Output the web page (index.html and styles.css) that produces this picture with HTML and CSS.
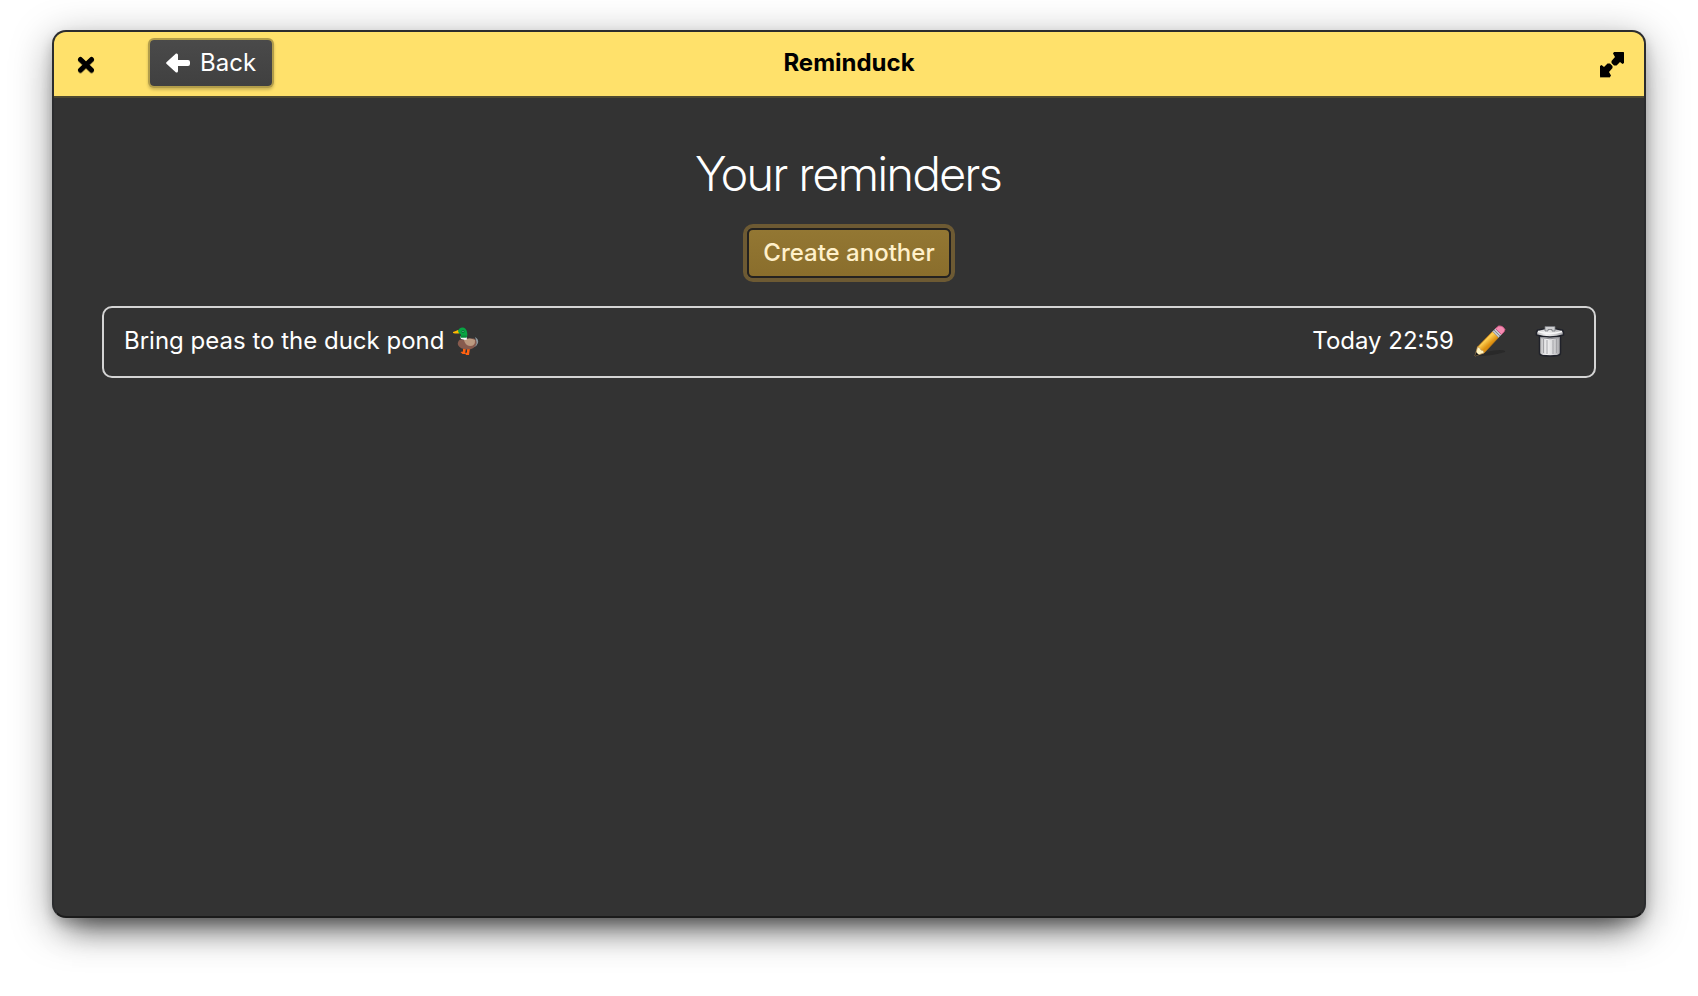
FILE: index.html
```
<!DOCTYPE html>
<html lang="en">
<head>
<meta charset="utf-8">
<meta name="viewport" content="width=device-width, initial-scale=1">
<title>Reminduck</title>
<link rel="stylesheet" href="styles.css">
</head>
<body>
<div class="window">
  <header class="headerbar">
    <div class="header-start">
      <button class="icon-button" type="button" aria-label="Close">
        <svg width="18" height="18" viewBox="0 0 18 18"><path d="M3.500 4.500 14.500 15M14.500 4.500 3.500 15" stroke="#000" stroke-opacity=".35" stroke-width="5" stroke-linecap="round"/><path d="M3.500 3.500 14.500 14M14.500 3.500 3.500 14" stroke="#000" stroke-width="5" stroke-linecap="round"/></svg>
      </button>
      <button class="back-button" type="button">
        <svg width="24" height="20" viewBox="0 0 24 20"><path d="M10 .5.700 9a1.300 1.300 0 0 0 0 2L10 19.500q2 .5 2-1.500v-5h10q2 0 2-2V9q0-2-2-2H12V2q0-2-2-1.500z" fill="#fff"/></svg>
        <span>Back</span>
      </button>
    </div>
    <h1 class="title">Reminduck</h1>
    <div class="header-end">
      <button class="icon-button" type="button" aria-label="Maximize">
        <svg width="24" height="26" viewBox="0 0 24 26"><g><path d="M14 0h9.500l.5.500V11l-1.500 1-2.500-2-3.500 3.500H14L11.500 11V9L15 5l-2-3.500z"/><path d="M10 25H.5L0 24.500V14l1.500-1L4 15l3.500-3.500H10l2.500 2.500v2L9 20l2 3.500z"/></g><path d="M0 25h10" stroke="#000" stroke-opacity=".35" stroke-width="2"/><path d="m10.500 14.500 4-4" stroke="#ffe16b" stroke-width="0"/></svg>
      </button>
    </div>
  </header>
  <main class="content">
    <h2 class="heading">Your reminders</h2>
    <button class="create-button" type="button">Create another</button>
    <ul class="reminders">
      <li class="reminder">
        <span class="description">Bring peas to the duck pond
          <svg class="duck" width="26" height="28" viewBox="0 0 26 28" role="img" aria-label="duck">
            <path d="M10 21v3.500l-2.500.5 2 2H12l1-6zM14 21v4.500l-2 .5 1 2h3l1-7z" fill="#ff6110"/>
            <path d="M21 18q3-4 1-8 4 2 3 6-1 3-4 4z" fill="#8b979f"/>
            <path d="M7 12.500q4 1 7-1h7q3 2 2.500 5Q22 22.500 14 22.500 7 22 5 18q-1-3 2-5.500z" fill="#875b4e"/>
            <path d="M11 13q6-3 11 0 .5 6-5 6-5-.5-6-6z" fill="#bc9a80"/>
            <path d="M7 9.500h6.500l.5 3-2 .5-4-1z" fill="#f4f6f6"/>
            <path d="M0 5q3-1 5-2l2 1v2q-3 1-7 0z" fill="#fcb900"/>
            <path d="M5 4q1-3.500 4.500-3.500T14 5t-1 5.500H7.500L8 7.500Q5.500 7 5 4z" fill="#08a443"/>
            <path d="M7.500 10.500 8 8.500h5.500v2z" fill="#07883b"/>
            <circle cx="10" cy="4.500" r="1.500" fill="#047937"/><circle cx="10" cy="4.500" r=".6" fill="#8cc9a0"/>
          </svg>
        </span>
        <time class="time">Today 22:59</time>
        <button class="row-button" type="button" aria-label="Edit reminder">
          <svg width="32" height="32" viewBox="0 0 32 32">
            <defs><linearGradient id="wood" x1="8" y1="12" x2="15" y2="20" gradientUnits="userSpaceOnUse"><stop offset="0" stop-color="#f3a51c"/><stop offset=".45" stop-color="#ffd052"/><stop offset="1" stop-color="#dd9010"/></linearGradient></defs>
            <path d="M3 31Q14 25 26 25q6 0 5 2-13 4-26 4z" fill="#292929"/>
            <path d="M3.500 22 19 6l6 6L10 28z" fill="url(#wood)" stroke="#be7b18" stroke-width=".8"/>
            <path d="M3.500 22 1 31l9-3q0-3-3-3-1-3-3.500-3z" fill="#fff3c0" stroke="#c99a52" stroke-width=".7"/>
            <path d="m1 31 1-4 3 3z" fill="#171717"/>
            <path d="m18.500 6.500 3-3 6 6-3 3z" fill="#c3c5ca" stroke="#8d8f95" stroke-width=".7"/>
            <path d="m20 5 6 6" stroke="#85878d"/>
            <path d="M21.500 3.500 24.500 1q4-1 6.500 3.500 0 2-3.500 5z" fill="#f58bb2" stroke="#ca527f" stroke-width=".8"/>
          </svg>
        </button>
        <button class="row-button" type="button" aria-label="Delete reminder">
          <svg width="32" height="32" viewBox="0 0 32 32">
            <defs><linearGradient id="metal"><stop offset="0" stop-color="#b8b8ba"/><stop offset=".35" stop-color="#f1f1f2"/><stop offset=".65" stop-color="#d6d6d8"/><stop offset="1" stop-color="#a2a2a6"/></linearGradient></defs>
            <path d="M5.500 11h21v17q0 2-3 2.500-7 1-15 0-3-.5-3-2.500z" fill="url(#metal)" stroke="#20222a" stroke-width="1.500"/>
            <path d="M9.500 14v14M13 15v14M19 15v14M22.500 14v14" stroke="#a2a2a6" stroke-width="1"/>
            <path d="M4 5q12-3 24 0 2 1 1.500 5-13.500 4-27 0Q2 6 4 5z" fill="url(#metal)" stroke="#20222a" stroke-width="1.500"/>
            <path d="M4 6.500q12 4 24 0" fill="none" stroke="#f7f7f7" stroke-width="1.500"/>
            <path d="M6 12.500q10 2.500 20 0" fill="none" stroke="#88888d"/>
            <path d="M11 6V1.500h10V6h-3V4.500h-4V6z" fill="#cecfd1" stroke="#77797f" stroke-width=".8"/>
          </svg>
        </button>
      </li>
    </ul>
  </main>
</div>
</body>
</html>
```

FILE: styles.css
```
* { box-sizing: border-box; }

body {
  margin: 0;
  min-height: 100vh;
  padding: 30px 52px 78px;
  display: flex;
  background: #fff;
  color: #fff;
  font-family: Inter, "Open Sans", sans-serif;
  font-size: 24px;
  line-height: 30px;
}

button {
  margin: 0;
  padding: 0;
  border: 0;
  background: none;
  color: inherit;
  font: inherit;
}

svg { display: block; flex: none; }

.window {
  flex: 1;
  display: flex;
  flex-direction: column;
  overflow: hidden;
  border: 2px solid #2b2c2e;
  border-bottom-color: #1b1b1b;
  border-radius: 14px;
  background: #333;
  box-shadow: 0 6px 12px rgba(0, 0, 0, .18), 0 28px 28px -20px rgba(0, 0, 0, .5), 0 10px 40px rgba(0, 0, 0, .36);
}

.headerbar {
  display: grid;
  grid-template-columns: 1fr auto 1fr;
  align-items: start;
  height: 66px;
  padding: 6px 16px;
  border-bottom: 2px solid #4e4930;
  background: #ffe16b;
  color: #000;
}

.header-start {
  display: flex;
  gap: 46px;
}

.header-end {
  display: flex;
  justify-content: flex-end;
}

.icon-button {
  display: grid;
  place-items: center;
  width: 32px;
  height: 54px;
}

.back-button {
  display: flex;
  align-items: center;
  gap: 10px;
  height: 50px;
  padding: 0 16px;
  border: 2px solid rgba(0, 0, 0, .3);
  border-radius: 6px;
  background: linear-gradient(#4a4a4a, #404040) padding-box;
  box-shadow: 0 2px 3px rgba(0, 0, 0, .2);
  color: #fff;
}

.title {
  margin: 0;
  font-size: 24px;
  font-weight: 700;
  line-height: 50px;
}

.content {
  flex: 1;
  display: flex;
  flex-direction: column;
  align-items: center;
  padding: 46px 48px;
}

.heading {
  margin: 0;
  font-family: "Inter Display", Inter, sans-serif;
  font-size: 48px;
  font-variation-settings: "opsz" 32;
  font-weight: 300;
  line-height: 60px;
}

.create-button {
  height: 50px;
  margin-top: 24px;
  padding: 0 14px;
  border: 2px solid #242220;
  border-radius: 6px;
  background: linear-gradient(#937733, #8a6e2c);
  box-shadow: 0 0 0 4px #6d5a33;
  color: #fff0ca;
  font-weight: 500;
}

.reminders {
  align-self: stretch;
  margin: 28px 0 0;
  padding: 0;
  list-style: none;
}

.reminder {
  display: flex;
  align-items: center;
  height: 72px;
  padding: 0 14px 2px 20px;
  border: 2px solid #d4d4d4;
  border-radius: 10px;
}

.description {
  display: flex;
  align-items: center;
  gap: 9px;
  flex: 1;
}

.time { margin-right: 6px; }

.row-button {
  display: grid;
  place-items: center;
  width: 60px;
  height: 48px;
}
```
